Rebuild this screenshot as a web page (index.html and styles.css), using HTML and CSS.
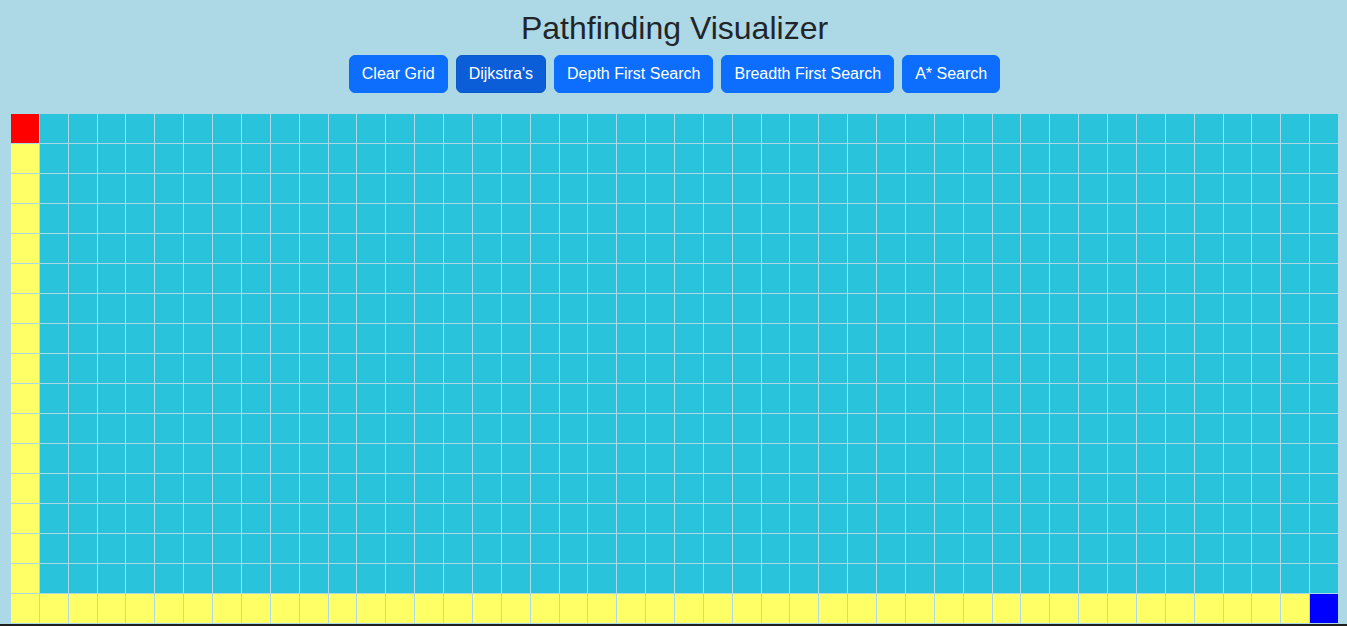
FILE: index.html
```html
<!DOCTYPE html>
<html lang="en">
<head>
<meta charset="utf-8">
<title>Pathfinding Visualizer</title>
<link rel="stylesheet" href="styles.css">
</head>
<body>
<h1 class="title">Pathfinding Visualizer</h1>
<div class="toolbar">
  <button class="btn">Clear Grid</button>
  <button class="btn btn-active">Dijkstra's</button>
  <button class="btn">Depth First Search</button>
  <button class="btn">Breadth First Search</button>
  <button class="btn">A* Search</button>
</div>
<div class="grid">
<div class="cell start"></div><div class="cell"></div><div class="cell"></div><div class="cell"></div><div class="cell"></div><div class="cell"></div><div class="cell"></div><div class="cell"></div><div class="cell"></div><div class="cell"></div><div class="cell"></div><div class="cell"></div><div class="cell"></div><div class="cell"></div><div class="cell"></div><div class="cell"></div><div class="cell"></div><div class="cell"></div><div class="cell"></div><div class="cell"></div><div class="cell"></div><div class="cell"></div><div class="cell"></div><div class="cell"></div><div class="cell"></div><div class="cell"></div><div class="cell"></div><div class="cell"></div><div class="cell"></div><div class="cell"></div><div class="cell"></div><div class="cell"></div><div class="cell"></div><div class="cell"></div><div class="cell"></div><div class="cell"></div><div class="cell"></div><div class="cell"></div><div class="cell"></div><div class="cell"></div><div class="cell"></div><div class="cell"></div><div class="cell"></div><div class="cell"></div><div class="cell"></div><div class="cell"></div>
<div class="cell path"></div><div class="cell"></div><div class="cell"></div><div class="cell"></div><div class="cell"></div><div class="cell"></div><div class="cell"></div><div class="cell"></div><div class="cell"></div><div class="cell"></div><div class="cell"></div><div class="cell"></div><div class="cell"></div><div class="cell"></div><div class="cell"></div><div class="cell"></div><div class="cell"></div><div class="cell"></div><div class="cell"></div><div class="cell"></div><div class="cell"></div><div class="cell"></div><div class="cell"></div><div class="cell"></div><div class="cell"></div><div class="cell"></div><div class="cell"></div><div class="cell"></div><div class="cell"></div><div class="cell"></div><div class="cell"></div><div class="cell"></div><div class="cell"></div><div class="cell"></div><div class="cell"></div><div class="cell"></div><div class="cell"></div><div class="cell"></div><div class="cell"></div><div class="cell"></div><div class="cell"></div><div class="cell"></div><div class="cell"></div><div class="cell"></div><div class="cell"></div><div class="cell"></div>
<div class="cell path"></div><div class="cell"></div><div class="cell"></div><div class="cell"></div><div class="cell"></div><div class="cell"></div><div class="cell"></div><div class="cell"></div><div class="cell"></div><div class="cell"></div><div class="cell"></div><div class="cell"></div><div class="cell"></div><div class="cell"></div><div class="cell"></div><div class="cell"></div><div class="cell"></div><div class="cell"></div><div class="cell"></div><div class="cell"></div><div class="cell"></div><div class="cell"></div><div class="cell"></div><div class="cell"></div><div class="cell"></div><div class="cell"></div><div class="cell"></div><div class="cell"></div><div class="cell"></div><div class="cell"></div><div class="cell"></div><div class="cell"></div><div class="cell"></div><div class="cell"></div><div class="cell"></div><div class="cell"></div><div class="cell"></div><div class="cell"></div><div class="cell"></div><div class="cell"></div><div class="cell"></div><div class="cell"></div><div class="cell"></div><div class="cell"></div><div class="cell"></div><div class="cell"></div>
<div class="cell path"></div><div class="cell"></div><div class="cell"></div><div class="cell"></div><div class="cell"></div><div class="cell"></div><div class="cell"></div><div class="cell"></div><div class="cell"></div><div class="cell"></div><div class="cell"></div><div class="cell"></div><div class="cell"></div><div class="cell"></div><div class="cell"></div><div class="cell"></div><div class="cell"></div><div class="cell"></div><div class="cell"></div><div class="cell"></div><div class="cell"></div><div class="cell"></div><div class="cell"></div><div class="cell"></div><div class="cell"></div><div class="cell"></div><div class="cell"></div><div class="cell"></div><div class="cell"></div><div class="cell"></div><div class="cell"></div><div class="cell"></div><div class="cell"></div><div class="cell"></div><div class="cell"></div><div class="cell"></div><div class="cell"></div><div class="cell"></div><div class="cell"></div><div class="cell"></div><div class="cell"></div><div class="cell"></div><div class="cell"></div><div class="cell"></div><div class="cell"></div><div class="cell"></div>
<div class="cell path"></div><div class="cell"></div><div class="cell"></div><div class="cell"></div><div class="cell"></div><div class="cell"></div><div class="cell"></div><div class="cell"></div><div class="cell"></div><div class="cell"></div><div class="cell"></div><div class="cell"></div><div class="cell"></div><div class="cell"></div><div class="cell"></div><div class="cell"></div><div class="cell"></div><div class="cell"></div><div class="cell"></div><div class="cell"></div><div class="cell"></div><div class="cell"></div><div class="cell"></div><div class="cell"></div><div class="cell"></div><div class="cell"></div><div class="cell"></div><div class="cell"></div><div class="cell"></div><div class="cell"></div><div class="cell"></div><div class="cell"></div><div class="cell"></div><div class="cell"></div><div class="cell"></div><div class="cell"></div><div class="cell"></div><div class="cell"></div><div class="cell"></div><div class="cell"></div><div class="cell"></div><div class="cell"></div><div class="cell"></div><div class="cell"></div><div class="cell"></div><div class="cell"></div>
<div class="cell path"></div><div class="cell"></div><div class="cell"></div><div class="cell"></div><div class="cell"></div><div class="cell"></div><div class="cell"></div><div class="cell"></div><div class="cell"></div><div class="cell"></div><div class="cell"></div><div class="cell"></div><div class="cell"></div><div class="cell"></div><div class="cell"></div><div class="cell"></div><div class="cell"></div><div class="cell"></div><div class="cell"></div><div class="cell"></div><div class="cell"></div><div class="cell"></div><div class="cell"></div><div class="cell"></div><div class="cell"></div><div class="cell"></div><div class="cell"></div><div class="cell"></div><div class="cell"></div><div class="cell"></div><div class="cell"></div><div class="cell"></div><div class="cell"></div><div class="cell"></div><div class="cell"></div><div class="cell"></div><div class="cell"></div><div class="cell"></div><div class="cell"></div><div class="cell"></div><div class="cell"></div><div class="cell"></div><div class="cell"></div><div class="cell"></div><div class="cell"></div><div class="cell"></div>
<div class="cell path"></div><div class="cell"></div><div class="cell"></div><div class="cell"></div><div class="cell"></div><div class="cell"></div><div class="cell"></div><div class="cell"></div><div class="cell"></div><div class="cell"></div><div class="cell"></div><div class="cell"></div><div class="cell"></div><div class="cell"></div><div class="cell"></div><div class="cell"></div><div class="cell"></div><div class="cell"></div><div class="cell"></div><div class="cell"></div><div class="cell"></div><div class="cell"></div><div class="cell"></div><div class="cell"></div><div class="cell"></div><div class="cell"></div><div class="cell"></div><div class="cell"></div><div class="cell"></div><div class="cell"></div><div class="cell"></div><div class="cell"></div><div class="cell"></div><div class="cell"></div><div class="cell"></div><div class="cell"></div><div class="cell"></div><div class="cell"></div><div class="cell"></div><div class="cell"></div><div class="cell"></div><div class="cell"></div><div class="cell"></div><div class="cell"></div><div class="cell"></div><div class="cell"></div>
<div class="cell path"></div><div class="cell"></div><div class="cell"></div><div class="cell"></div><div class="cell"></div><div class="cell"></div><div class="cell"></div><div class="cell"></div><div class="cell"></div><div class="cell"></div><div class="cell"></div><div class="cell"></div><div class="cell"></div><div class="cell"></div><div class="cell"></div><div class="cell"></div><div class="cell"></div><div class="cell"></div><div class="cell"></div><div class="cell"></div><div class="cell"></div><div class="cell"></div><div class="cell"></div><div class="cell"></div><div class="cell"></div><div class="cell"></div><div class="cell"></div><div class="cell"></div><div class="cell"></div><div class="cell"></div><div class="cell"></div><div class="cell"></div><div class="cell"></div><div class="cell"></div><div class="cell"></div><div class="cell"></div><div class="cell"></div><div class="cell"></div><div class="cell"></div><div class="cell"></div><div class="cell"></div><div class="cell"></div><div class="cell"></div><div class="cell"></div><div class="cell"></div><div class="cell"></div>
<div class="cell path"></div><div class="cell"></div><div class="cell"></div><div class="cell"></div><div class="cell"></div><div class="cell"></div><div class="cell"></div><div class="cell"></div><div class="cell"></div><div class="cell"></div><div class="cell"></div><div class="cell"></div><div class="cell"></div><div class="cell"></div><div class="cell"></div><div class="cell"></div><div class="cell"></div><div class="cell"></div><div class="cell"></div><div class="cell"></div><div class="cell"></div><div class="cell"></div><div class="cell"></div><div class="cell"></div><div class="cell"></div><div class="cell"></div><div class="cell"></div><div class="cell"></div><div class="cell"></div><div class="cell"></div><div class="cell"></div><div class="cell"></div><div class="cell"></div><div class="cell"></div><div class="cell"></div><div class="cell"></div><div class="cell"></div><div class="cell"></div><div class="cell"></div><div class="cell"></div><div class="cell"></div><div class="cell"></div><div class="cell"></div><div class="cell"></div><div class="cell"></div><div class="cell"></div>
<div class="cell path"></div><div class="cell"></div><div class="cell"></div><div class="cell"></div><div class="cell"></div><div class="cell"></div><div class="cell"></div><div class="cell"></div><div class="cell"></div><div class="cell"></div><div class="cell"></div><div class="cell"></div><div class="cell"></div><div class="cell"></div><div class="cell"></div><div class="cell"></div><div class="cell"></div><div class="cell"></div><div class="cell"></div><div class="cell"></div><div class="cell"></div><div class="cell"></div><div class="cell"></div><div class="cell"></div><div class="cell"></div><div class="cell"></div><div class="cell"></div><div class="cell"></div><div class="cell"></div><div class="cell"></div><div class="cell"></div><div class="cell"></div><div class="cell"></div><div class="cell"></div><div class="cell"></div><div class="cell"></div><div class="cell"></div><div class="cell"></div><div class="cell"></div><div class="cell"></div><div class="cell"></div><div class="cell"></div><div class="cell"></div><div class="cell"></div><div class="cell"></div><div class="cell"></div>
<div class="cell path"></div><div class="cell"></div><div class="cell"></div><div class="cell"></div><div class="cell"></div><div class="cell"></div><div class="cell"></div><div class="cell"></div><div class="cell"></div><div class="cell"></div><div class="cell"></div><div class="cell"></div><div class="cell"></div><div class="cell"></div><div class="cell"></div><div class="cell"></div><div class="cell"></div><div class="cell"></div><div class="cell"></div><div class="cell"></div><div class="cell"></div><div class="cell"></div><div class="cell"></div><div class="cell"></div><div class="cell"></div><div class="cell"></div><div class="cell"></div><div class="cell"></div><div class="cell"></div><div class="cell"></div><div class="cell"></div><div class="cell"></div><div class="cell"></div><div class="cell"></div><div class="cell"></div><div class="cell"></div><div class="cell"></div><div class="cell"></div><div class="cell"></div><div class="cell"></div><div class="cell"></div><div class="cell"></div><div class="cell"></div><div class="cell"></div><div class="cell"></div><div class="cell"></div>
<div class="cell path"></div><div class="cell"></div><div class="cell"></div><div class="cell"></div><div class="cell"></div><div class="cell"></div><div class="cell"></div><div class="cell"></div><div class="cell"></div><div class="cell"></div><div class="cell"></div><div class="cell"></div><div class="cell"></div><div class="cell"></div><div class="cell"></div><div class="cell"></div><div class="cell"></div><div class="cell"></div><div class="cell"></div><div class="cell"></div><div class="cell"></div><div class="cell"></div><div class="cell"></div><div class="cell"></div><div class="cell"></div><div class="cell"></div><div class="cell"></div><div class="cell"></div><div class="cell"></div><div class="cell"></div><div class="cell"></div><div class="cell"></div><div class="cell"></div><div class="cell"></div><div class="cell"></div><div class="cell"></div><div class="cell"></div><div class="cell"></div><div class="cell"></div><div class="cell"></div><div class="cell"></div><div class="cell"></div><div class="cell"></div><div class="cell"></div><div class="cell"></div><div class="cell"></div>
<div class="cell path"></div><div class="cell"></div><div class="cell"></div><div class="cell"></div><div class="cell"></div><div class="cell"></div><div class="cell"></div><div class="cell"></div><div class="cell"></div><div class="cell"></div><div class="cell"></div><div class="cell"></div><div class="cell"></div><div class="cell"></div><div class="cell"></div><div class="cell"></div><div class="cell"></div><div class="cell"></div><div class="cell"></div><div class="cell"></div><div class="cell"></div><div class="cell"></div><div class="cell"></div><div class="cell"></div><div class="cell"></div><div class="cell"></div><div class="cell"></div><div class="cell"></div><div class="cell"></div><div class="cell"></div><div class="cell"></div><div class="cell"></div><div class="cell"></div><div class="cell"></div><div class="cell"></div><div class="cell"></div><div class="cell"></div><div class="cell"></div><div class="cell"></div><div class="cell"></div><div class="cell"></div><div class="cell"></div><div class="cell"></div><div class="cell"></div><div class="cell"></div><div class="cell"></div>
<div class="cell path"></div><div class="cell"></div><div class="cell"></div><div class="cell"></div><div class="cell"></div><div class="cell"></div><div class="cell"></div><div class="cell"></div><div class="cell"></div><div class="cell"></div><div class="cell"></div><div class="cell"></div><div class="cell"></div><div class="cell"></div><div class="cell"></div><div class="cell"></div><div class="cell"></div><div class="cell"></div><div class="cell"></div><div class="cell"></div><div class="cell"></div><div class="cell"></div><div class="cell"></div><div class="cell"></div><div class="cell"></div><div class="cell"></div><div class="cell"></div><div class="cell"></div><div class="cell"></div><div class="cell"></div><div class="cell"></div><div class="cell"></div><div class="cell"></div><div class="cell"></div><div class="cell"></div><div class="cell"></div><div class="cell"></div><div class="cell"></div><div class="cell"></div><div class="cell"></div><div class="cell"></div><div class="cell"></div><div class="cell"></div><div class="cell"></div><div class="cell"></div><div class="cell"></div>
<div class="cell path"></div><div class="cell"></div><div class="cell"></div><div class="cell"></div><div class="cell"></div><div class="cell"></div><div class="cell"></div><div class="cell"></div><div class="cell"></div><div class="cell"></div><div class="cell"></div><div class="cell"></div><div class="cell"></div><div class="cell"></div><div class="cell"></div><div class="cell"></div><div class="cell"></div><div class="cell"></div><div class="cell"></div><div class="cell"></div><div class="cell"></div><div class="cell"></div><div class="cell"></div><div class="cell"></div><div class="cell"></div><div class="cell"></div><div class="cell"></div><div class="cell"></div><div class="cell"></div><div class="cell"></div><div class="cell"></div><div class="cell"></div><div class="cell"></div><div class="cell"></div><div class="cell"></div><div class="cell"></div><div class="cell"></div><div class="cell"></div><div class="cell"></div><div class="cell"></div><div class="cell"></div><div class="cell"></div><div class="cell"></div><div class="cell"></div><div class="cell"></div><div class="cell"></div>
<div class="cell path"></div><div class="cell"></div><div class="cell"></div><div class="cell"></div><div class="cell"></div><div class="cell"></div><div class="cell"></div><div class="cell"></div><div class="cell"></div><div class="cell"></div><div class="cell"></div><div class="cell"></div><div class="cell"></div><div class="cell"></div><div class="cell"></div><div class="cell"></div><div class="cell"></div><div class="cell"></div><div class="cell"></div><div class="cell"></div><div class="cell"></div><div class="cell"></div><div class="cell"></div><div class="cell"></div><div class="cell"></div><div class="cell"></div><div class="cell"></div><div class="cell"></div><div class="cell"></div><div class="cell"></div><div class="cell"></div><div class="cell"></div><div class="cell"></div><div class="cell"></div><div class="cell"></div><div class="cell"></div><div class="cell"></div><div class="cell"></div><div class="cell"></div><div class="cell"></div><div class="cell"></div><div class="cell"></div><div class="cell"></div><div class="cell"></div><div class="cell"></div><div class="cell"></div>
<div class="cell path"></div><div class="cell path"></div><div class="cell path"></div><div class="cell path"></div><div class="cell path"></div><div class="cell path"></div><div class="cell path"></div><div class="cell path"></div><div class="cell path"></div><div class="cell path"></div><div class="cell path"></div><div class="cell path"></div><div class="cell path"></div><div class="cell path"></div><div class="cell path"></div><div class="cell path"></div><div class="cell path"></div><div class="cell path"></div><div class="cell path"></div><div class="cell path"></div><div class="cell path"></div><div class="cell path"></div><div class="cell path"></div><div class="cell path"></div><div class="cell path"></div><div class="cell path"></div><div class="cell path"></div><div class="cell path"></div><div class="cell path"></div><div class="cell path"></div><div class="cell path"></div><div class="cell path"></div><div class="cell path"></div><div class="cell path"></div><div class="cell path"></div><div class="cell path"></div><div class="cell path"></div><div class="cell path"></div><div class="cell path"></div><div class="cell path"></div><div class="cell path"></div><div class="cell path"></div><div class="cell path"></div><div class="cell path"></div><div class="cell path"></div><div class="cell end"></div>
</div>
<div class="footer"></div>
</body>
</html>
```
FILE: styles.css
```css
html, body {
  margin: 0;
  height: 626px;
  overflow: hidden;
}

body {
  background: #add8e6;
  font-family: "Liberation Sans", Arial, sans-serif;
  display: flex;
  flex-direction: column;
}

.title {
  margin: 9px 0 8px;
  padding-left: 2px;
  font-size: 32px;
  line-height: 38px;
  font-weight: 400;
  text-align: center;
  color: #212529;
}

.toolbar {
  display: flex;
  justify-content: center;
  gap: 8px;
  padding-left: 2px;
}

.btn {
  padding: 6px 12px;
  font-family: "Liberation Sans", Arial, sans-serif;
  font-size: 16px;
  line-height: 24px;
  color: #fff;
  background: #0d6efd;
  border: 1px solid #0d6efd;
  border-radius: 6px;
}

.btn-active {
  background: #0b5ed7;
  border-color: #0a58ca;
}

.grid {
  margin: 21px 9px 0 11px;
  display: grid;
  grid-template-columns: repeat(46, 1fr);
  grid-auto-rows: 29px;
  gap: 1px;
  padding-bottom: 1px;
}

.cell {
  background: #29c4dc;
}

.cell.path {
  background: #ffff66;
}

.cell.start {
  background: #ff0000;
}

.cell.end {
  background: #0000ff;
}

.footer {
  height: 2px;
  background: #1f1f1f;
}
```
